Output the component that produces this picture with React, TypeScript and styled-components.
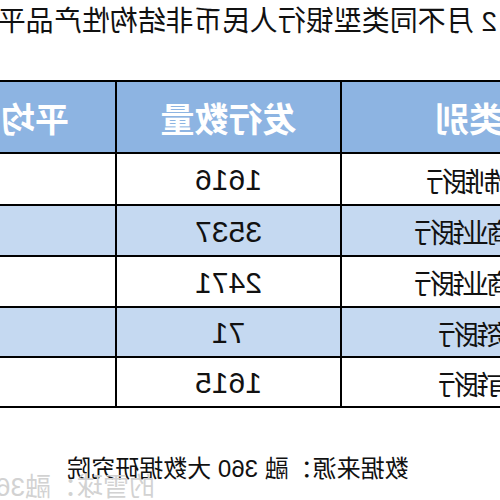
import React from "react";
import styled, { createGlobalStyle } from "styled-components";

const GlobalStyle = createGlobalStyle`
  html, body { margin: 0; padding: 0; background: #ffffff; }
  body { font-family: "Liberation Sans", "Noto Sans CJK SC", sans-serif; }
`;

const Page = styled.div`
  position: relative;
  width: 500px;
  height: 500px;
  overflow: hidden;
  background: #ffffff;
  transform: scaleX(-1);
  display: flex;
  flex-direction: column;
`;

const Title = styled.div`
  height: 80px;
  box-sizing: border-box;
  padding: 6px 0 0 3px;
  font-family: "Liberation Sans", "Noto Sans CJK SC", sans-serif;
  font-size: 28px;
  line-height: 32px;
  color: #111;
  white-space: nowrap;
`;

const Grid = styled.div`
  margin-left: -138px;
  width: max-content;
  display: grid;
  grid-template-columns: 294px 223px 262px;
  grid-template-rows: 70px 50px 49px 49px 48px 48px;
  gap: 2px;
  padding: 2px;
  background: #000;
`;

const HeadCell = styled.div<{ $padRight?: number }>`
  background: #8db4e2;
  color: #ffffff;
  font-weight: bold;
  font-size: 34px;
  display: flex;
  align-items: center;
  justify-content: center;
  white-space: nowrap;
  box-sizing: border-box;
  padding-right: ${(p) => p.$padRight ?? 0}px;
`;

const Cell = styled.div<{ $alt: boolean; $num?: boolean }>`
  background: ${(p) => (p.$alt ? "#c5d9f1" : "#ffffff")};
  color: #111;
  font-size: ${(p) => (p.$num ? "30px" : "27px")};
  letter-spacing: ${(p) => (p.$num ? "0" : "-3px")};
  display: flex;
  align-items: center;
  justify-content: center;
  white-space: nowrap;
  padding-top: 2px;
  box-sizing: border-box;
`;

const Footer = styled.div`
  margin-top: 46px;
  padding-left: 24px;
  text-align: center;
  font-size: 24px;
  line-height: 30px;
  color: #111;
  white-space: nowrap;
`;

const Watermark = styled.div`
  position: absolute;
  left: 345px;
  top: 472px;
  font-size: 26px;
  line-height: 30px;
  color: #d2d2d2;
  white-space: nowrap;
`;

const rows = [
  { name: "股份制银行", count: "1616" },
  { name: "城市商业银行", count: "3537" },
  { name: "农村商业银行", count: "2471" },
  { name: "外资银行", count: "71" },
  { name: "国有银行", count: "1615" },
];

export default function App() {
  return (
    <>
      <GlobalStyle />
      <Page>
        <Title>2 月不同类型银行人民币非结构性产品平均收益率</Title>
        <Grid>
          <HeadCell $padRight={28}>银行类别</HeadCell>
          <HeadCell>发行数量</HeadCell>
          <HeadCell>平均收益率</HeadCell>
          {rows.map((r, i) => (
            <React.Fragment key={r.name}>
              <Cell $alt={i % 2 === 1}>{r.name}</Cell>
              <Cell $alt={i % 2 === 1} $num>
                {r.count}
              </Cell>
              <Cell $alt={i % 2 === 1} />
            </React.Fragment>
          ))}
        </Grid>
        <Footer>数据来源：融 360 大数据研究院</Footer>
        <Watermark>的雪球：融360</Watermark>
      </Page>
    </>
  );
}
